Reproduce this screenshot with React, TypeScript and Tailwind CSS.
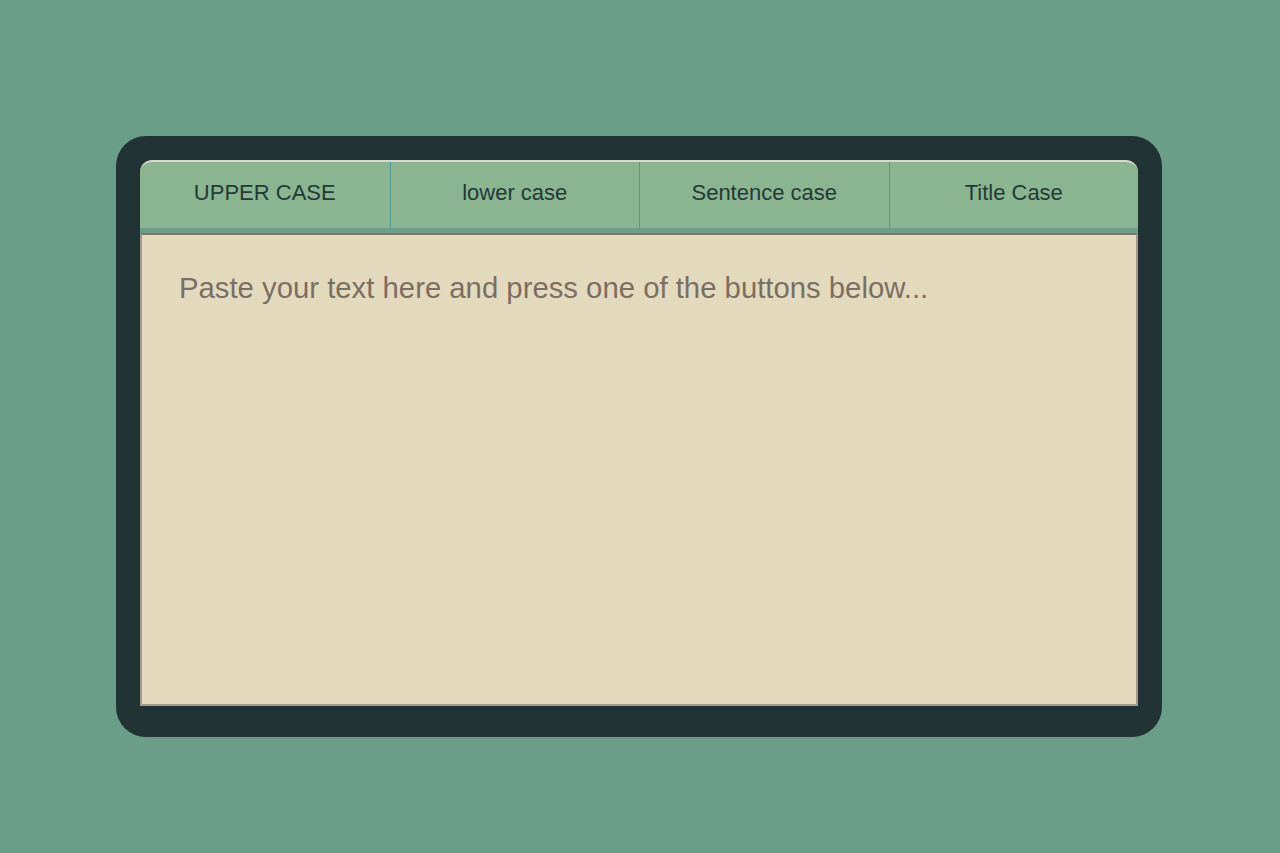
const modes = ['UPPER CASE', 'lower case', 'Sentence case', 'Title Case'];

export default function App() {
  return (
    <div className="min-h-screen bg-[#6b9e89] pt-[136px] font-['Liberation_Sans',Arial,sans-serif]">
      {/* Frame */}
      <div className="ml-[116px] w-[1046px] rounded-[30px] bg-[#213334] px-6 pt-6 pb-[31px]">
        {/* Buttons */}
        <div className="grid h-[73px] grid-cols-4 overflow-hidden rounded-t-[12px] border-t-2 border-[#d9d6cb] border-b-[5px] border-b-[#6a9f8b] bg-[#8bb491]">
          {modes.map((m, i) => (
            <button
              key={m}
              className={`flex items-center justify-center text-[22px] text-[#233a36] ${i > 0 ? 'border-l border-[#4f9a93]' : ''}`}
            >
              <span className="-mt-[6px]">{m}</span>
            </button>
          ))}
        </div>

        {/* Text area */}
        <textarea
          className="block h-[473px] w-full resize-none border-2 border-[#a39a8e] border-t-[#86746a] bg-[#e3dabd] px-[37px] pt-[31px] text-[29.3px] text-[#3a322b] outline-none placeholder:text-[#7b6e62]"
          placeholder="Paste your text here and press one of the buttons below..."
        />
      </div>
    </div>
  );
}
